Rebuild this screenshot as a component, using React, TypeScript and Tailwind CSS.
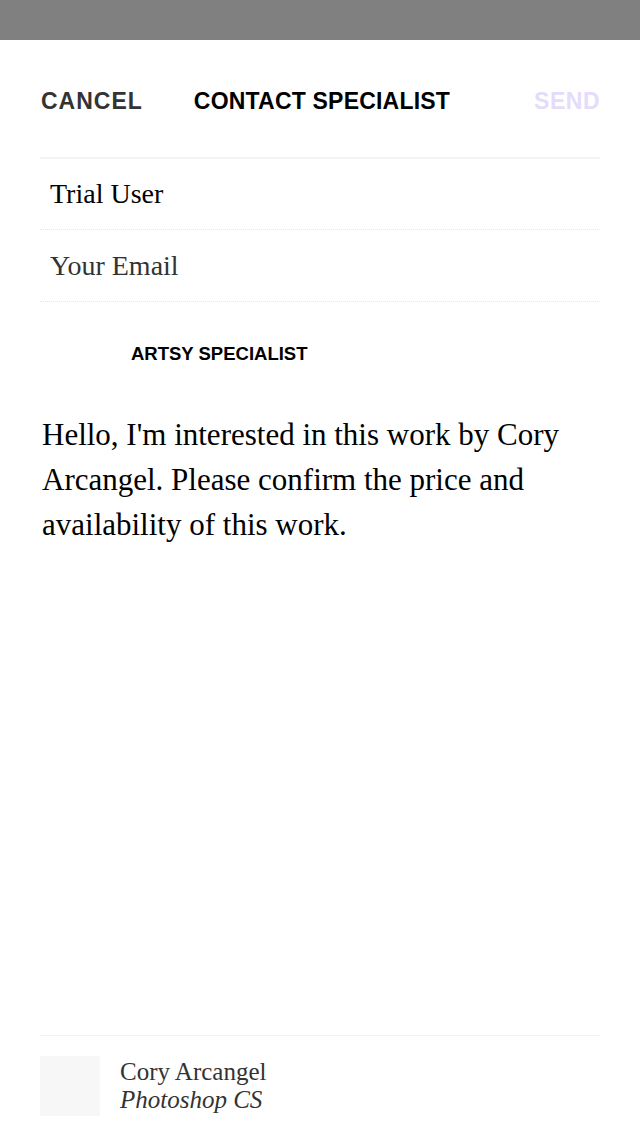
export default function App() {
  const sans = { fontFamily: '"Liberation Sans", Arial, sans-serif' };
  const serif = { fontFamily: '"Liberation Serif", "Times New Roman", serif' };

  return (
    <div className="h-[1136px] w-[640px] bg-white flex flex-col overflow-hidden">
      {/* status bar */}
      <div className="h-10 bg-[#808080] shrink-0" />

      <div className="flex-1 flex flex-col px-10">
        {/* header */}
        <div
          className="h-[119px] pt-[5px] flex items-center border-b-2 border-[#f3f3f3] font-bold text-[23px]"
          style={sans}
        >
          <span className="pl-px text-[#333333] tracking-[1px]">CANCEL</span>
          <span className="ml-[51px] text-black tracking-[0.2px]">CONTACT SPECIALIST</span>
          <span className="ml-auto text-[#e5dcfb] tracking-[0.5px]">SEND</span>
        </div>

        {/* fields */}
        <div className="h-[71px] flex items-center pl-[10px] border-b border-dotted border-[#e6e6e6] text-[28px] text-black" style={serif}>
          Trial User
        </div>
        <div className="h-[72px] flex items-center pl-[10px] border-b border-dotted border-[#e6e6e6] text-[28px] text-[#333333]" style={serif}>
          Your Email
        </div>

        <div className="pl-[91px] pt-[38px] text-[18.5px] font-bold text-black" style={sans}>
          ARTSY SPECIALIST
        </div>

        <div className="pt-[44px] pl-[2px] text-[31px] leading-[45px] text-black" style={serif}>
          Hello, I'm interested in this work by Cory Arcangel. Please confirm the price and availability of this work.
        </div>

        <div className="flex-1" />

        {/* artwork */}
        <div className="border-t border-[#f3f3f3] pt-5 pb-5 flex items-center gap-5">
          <div className="w-[60px] h-[60px] bg-[#f7f7f7] shrink-0" />
          <div className="text-[25px] leading-[28px] text-[#333333]" style={serif}>
            <div>Cory Arcangel</div>
            <div className="italic">Photoshop CS</div>
          </div>
        </div>
      </div>
    </div>
  );
}
